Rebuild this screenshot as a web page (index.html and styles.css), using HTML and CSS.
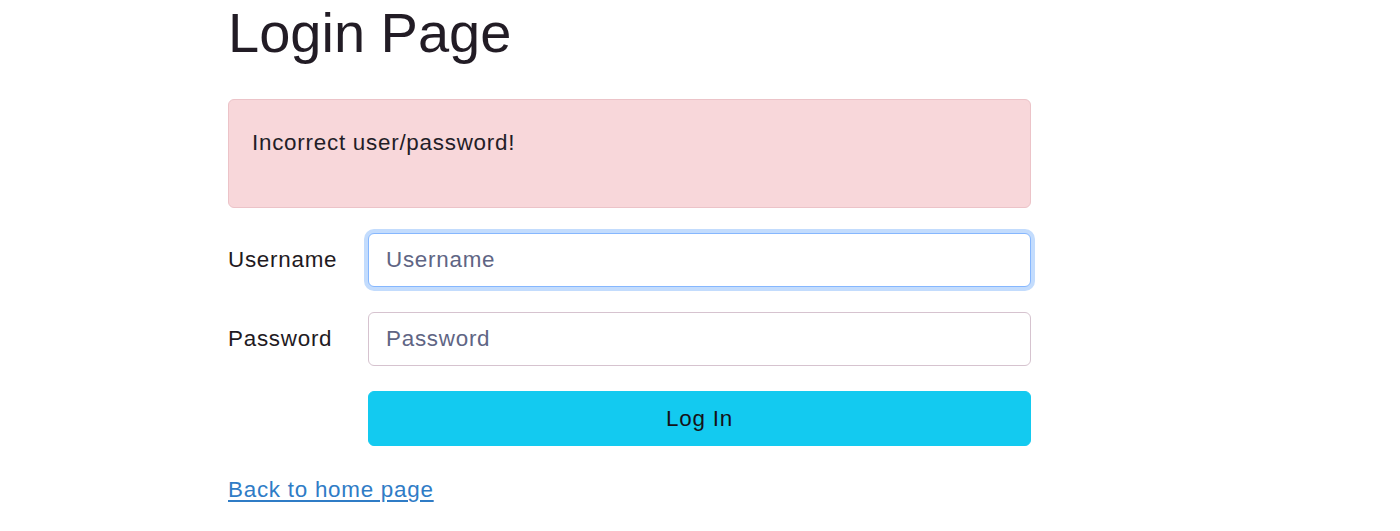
FILE: index.html
```html
<!DOCTYPE html>
<html lang="en">
<head>
<meta charset="utf-8">
<title>Login Page</title>
<link rel="stylesheet" href="styles.css">
</head>
<body>
<main class="page">
  <h1 class="title">Login Page</h1>
  <div class="alert" role="alert">
    <p class="alert-text">Incorrect user/password!</p>
  </div>
  <form class="login-form">
    <div class="form-row">
      <label class="form-label" for="username">Username</label>
      <input class="form-input is-focused" id="username" type="text" placeholder="Username">
    </div>
    <div class="form-row">
      <label class="form-label" for="password">Password</label>
      <input class="form-input" id="password" type="password" placeholder="Password">
    </div>
    <div class="form-row">
      <span class="form-spacer"></span>
      <button class="btn-login" type="button">Log In</button>
    </div>
  </form>
  <a class="back-link" href="#">Back to home page</a>
</main>
</body>
</html>
```

FILE: styles.css
```css
html, body {
  margin: 0;
  padding: 0;
  background: #ffffff;
}

body {
  font-family: "Liberation Sans", Arial, Helvetica, sans-serif;
  color: #211b24;
  font-size: 22.4px;
  line-height: 1.5;
  letter-spacing: 0.75px;
}

.page {
  width: 803px;
  margin-left: 228px;
  display: flex;
  flex-direction: column;
  align-items: flex-start;
}

.title {
  margin: -1px 0 33px 0;
  font-size: 56px;
  font-weight: 400;
  line-height: 1.2;
  letter-spacing: 0;
  color: #221c25;
}

.alert {
  box-sizing: border-box;
  width: 100%;
  height: 109px;
  padding: 26px 23px 0 23px;
  background: #f8d7da;
  border: 1px solid #ecc3c8;
  border-radius: 6px;
  margin-bottom: 25px;
}

.alert-text {
  margin: 0;
  color: #231d27;
}

.login-form {
  width: 100%;
  display: flex;
  flex-direction: column;
  gap: 25px;
}

.form-row {
  display: grid;
  grid-template-columns: 140px 1fr;
  align-items: center;
}

.form-label {
  color: #1f1a22;
}

.form-input {
  box-sizing: border-box;
  width: 100%;
  height: 54px;
  margin: 0;
  padding: 0 17px;
  font: inherit;
  letter-spacing: 0.75px;
  color: #212529;
  background: #ffffff;
  border: 1px solid #d6c3cf;
  border-radius: 6px;
  outline: none;
}

.form-input::placeholder {
  color: #5f6584;
  opacity: 1;
}

.form-input.is-focused {
  border-color: #86b7fe;
  box-shadow: 0 0 0 4px #c3dcfd;
}

.btn-login {
  box-sizing: border-box;
  width: 100%;
  height: 55px;
  margin: 0;
  font: inherit;
  letter-spacing: 0.75px;
  color: #151218;
  background: #13caf0;
  border: 1px solid #13caf0;
  border-radius: 6px;
  cursor: pointer;
}

.back-link {
  margin-top: 27px;
  color: #2f7cc6;
  text-decoration: underline;
  text-underline-offset: 3px;
}
```
